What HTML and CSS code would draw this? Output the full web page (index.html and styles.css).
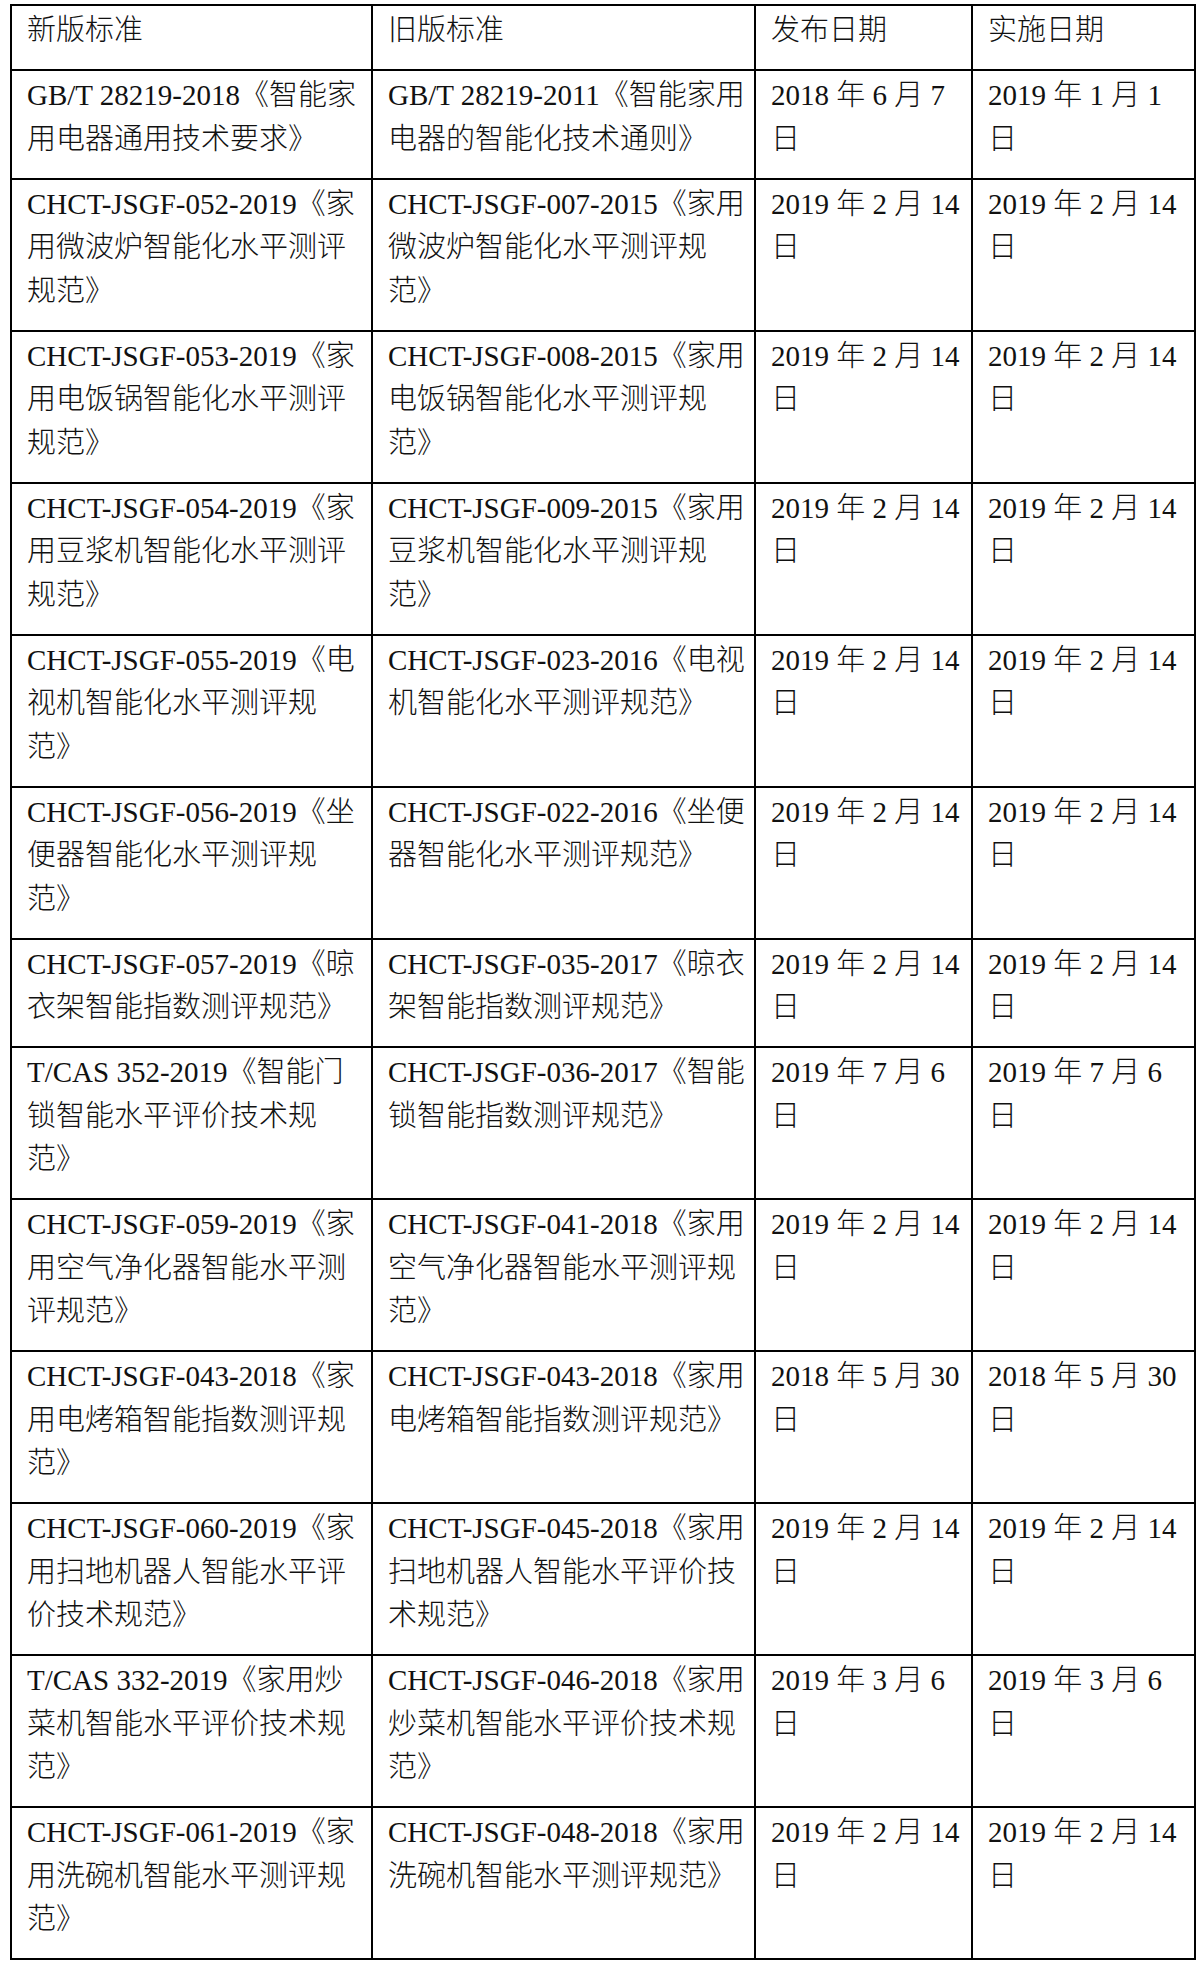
FILE: index.html
```html
<!DOCTYPE html>
<html lang="zh-CN">
<head>
<meta charset="utf-8">
<title>标准对照表</title>
<link rel="stylesheet" href="styles.css">
</head>
<body>
<table class="std">
  <colgroup>
    <col class="c1"><col class="c2"><col class="c3"><col class="c4">
  </colgroup>
  <tr>
    <td><span class="ln">新版标准</span></td>
    <td><span class="ln">旧版标准</span></td>
    <td><span class="ln">发布日期</span></td>
    <td><span class="ln">实施日期</span></td>
  </tr>
  <tr>
    <td><span class="ln">GB/T 28219-2018《智能家</span><span class="ln">用电器通用技术要求》</span></td>
    <td><span class="ln">GB/T 28219-2011《智能家用</span><span class="ln">电器的智能化技术通则》</span></td>
    <td><span class="ln">2018 年 6 月 7</span><span class="ln">日</span></td>
    <td><span class="ln">2019 年 1 月 1</span><span class="ln">日</span></td>
  </tr>
  <tr>
    <td><span class="ln">CHCT-JSGF-052-2019《家</span><span class="ln">用微波炉智能化水平测评</span><span class="ln">规范》</span></td>
    <td><span class="ln">CHCT-JSGF-007-2015《家用</span><span class="ln">微波炉智能化水平测评规</span><span class="ln">范》</span></td>
    <td><span class="ln">2019 年 2 月 14</span><span class="ln">日</span></td>
    <td><span class="ln">2019 年 2 月 14</span><span class="ln">日</span></td>
  </tr>
  <tr>
    <td><span class="ln">CHCT-JSGF-053-2019《家</span><span class="ln">用电饭锅智能化水平测评</span><span class="ln">规范》</span></td>
    <td><span class="ln">CHCT-JSGF-008-2015《家用</span><span class="ln">电饭锅智能化水平测评规</span><span class="ln">范》</span></td>
    <td><span class="ln">2019 年 2 月 14</span><span class="ln">日</span></td>
    <td><span class="ln">2019 年 2 月 14</span><span class="ln">日</span></td>
  </tr>
  <tr>
    <td><span class="ln">CHCT-JSGF-054-2019《家</span><span class="ln">用豆浆机智能化水平测评</span><span class="ln">规范》</span></td>
    <td><span class="ln">CHCT-JSGF-009-2015《家用</span><span class="ln">豆浆机智能化水平测评规</span><span class="ln">范》</span></td>
    <td><span class="ln">2019 年 2 月 14</span><span class="ln">日</span></td>
    <td><span class="ln">2019 年 2 月 14</span><span class="ln">日</span></td>
  </tr>
  <tr>
    <td><span class="ln">CHCT-JSGF-055-2019《电</span><span class="ln">视机智能化水平测评规</span><span class="ln">范》</span></td>
    <td><span class="ln">CHCT-JSGF-023-2016《电视</span><span class="ln">机智能化水平测评规范》</span></td>
    <td><span class="ln">2019 年 2 月 14</span><span class="ln">日</span></td>
    <td><span class="ln">2019 年 2 月 14</span><span class="ln">日</span></td>
  </tr>
  <tr>
    <td><span class="ln">CHCT-JSGF-056-2019《坐</span><span class="ln">便器智能化水平测评规</span><span class="ln">范》</span></td>
    <td><span class="ln">CHCT-JSGF-022-2016《坐便</span><span class="ln">器智能化水平测评规范》</span></td>
    <td><span class="ln">2019 年 2 月 14</span><span class="ln">日</span></td>
    <td><span class="ln">2019 年 2 月 14</span><span class="ln">日</span></td>
  </tr>
  <tr>
    <td><span class="ln">CHCT-JSGF-057-2019《晾</span><span class="ln">衣架智能指数测评规范》</span></td>
    <td><span class="ln">CHCT-JSGF-035-2017《晾衣</span><span class="ln">架智能指数测评规范》</span></td>
    <td><span class="ln">2019 年 2 月 14</span><span class="ln">日</span></td>
    <td><span class="ln">2019 年 2 月 14</span><span class="ln">日</span></td>
  </tr>
  <tr>
    <td><span class="ln">T/CAS 352-2019《智能门</span><span class="ln">锁智能水平评价技术规</span><span class="ln">范》</span></td>
    <td><span class="ln">CHCT-JSGF-036-2017《智能</span><span class="ln">锁智能指数测评规范》</span></td>
    <td><span class="ln">2019 年 7 月 6</span><span class="ln">日</span></td>
    <td><span class="ln">2019 年 7 月 6</span><span class="ln">日</span></td>
  </tr>
  <tr>
    <td><span class="ln">CHCT-JSGF-059-2019《家</span><span class="ln">用空气净化器智能水平测</span><span class="ln">评规范》</span></td>
    <td><span class="ln">CHCT-JSGF-041-2018《家用</span><span class="ln">空气净化器智能水平测评规</span><span class="ln">范》</span></td>
    <td><span class="ln">2019 年 2 月 14</span><span class="ln">日</span></td>
    <td><span class="ln">2019 年 2 月 14</span><span class="ln">日</span></td>
  </tr>
  <tr>
    <td><span class="ln">CHCT-JSGF-043-2018《家</span><span class="ln">用电烤箱智能指数测评规</span><span class="ln">范》</span></td>
    <td><span class="ln">CHCT-JSGF-043-2018《家用</span><span class="ln">电烤箱智能指数测评规范》</span></td>
    <td><span class="ln">2018 年 5 月 30</span><span class="ln">日</span></td>
    <td><span class="ln">2018 年 5 月 30</span><span class="ln">日</span></td>
  </tr>
  <tr>
    <td><span class="ln">CHCT-JSGF-060-2019《家</span><span class="ln">用扫地机器人智能水平评</span><span class="ln">价技术规范》</span></td>
    <td><span class="ln">CHCT-JSGF-045-2018《家用</span><span class="ln">扫地机器人智能水平评价技</span><span class="ln">术规范》</span></td>
    <td><span class="ln">2019 年 2 月 14</span><span class="ln">日</span></td>
    <td><span class="ln">2019 年 2 月 14</span><span class="ln">日</span></td>
  </tr>
  <tr>
    <td><span class="ln">T/CAS 332-2019《家用炒</span><span class="ln">菜机智能水平评价技术规</span><span class="ln">范》</span></td>
    <td><span class="ln">CHCT-JSGF-046-2018《家用</span><span class="ln">炒菜机智能水平评价技术规</span><span class="ln">范》</span></td>
    <td><span class="ln">2019 年 3 月 6</span><span class="ln">日</span></td>
    <td><span class="ln">2019 年 3 月 6</span><span class="ln">日</span></td>
  </tr>
  <tr>
    <td><span class="ln">CHCT-JSGF-061-2019《家</span><span class="ln">用洗碗机智能水平测评规</span><span class="ln">范》</span></td>
    <td><span class="ln">CHCT-JSGF-048-2018《家用</span><span class="ln">洗碗机智能水平测评规范》</span></td>
    <td><span class="ln">2019 年 2 月 14</span><span class="ln">日</span></td>
    <td><span class="ln">2019 年 2 月 14</span><span class="ln">日</span></td>
  </tr>
</table>
</body>
</html>
```
FILE: styles.css
```css
html, body {
  margin: 0;
  padding: 0;
  background: #ffffff;
}

body {
  font-family: "Liberation Serif", "Noto Sans CJK SC", serif;
  font-size: 29px;
  font-weight: 300;
  color: #111111;
}

.std {
  border-collapse: collapse;
  table-layout: fixed;
  width: 1186px;
  margin: 4px 0 0 10px;
}

.c1 { width: 361px; }
.c2 { width: 383px; }
.c3 { width: 217px; }
.c4 { width: 223px; }

.std td {
  border: 2px solid #000000;
  vertical-align: top;
  padding: 3px 14px 16.5px 15px;
  white-space: nowrap;
  overflow: hidden;
}

.ln {
  display: block;
  line-height: 43.5px;
}
```
